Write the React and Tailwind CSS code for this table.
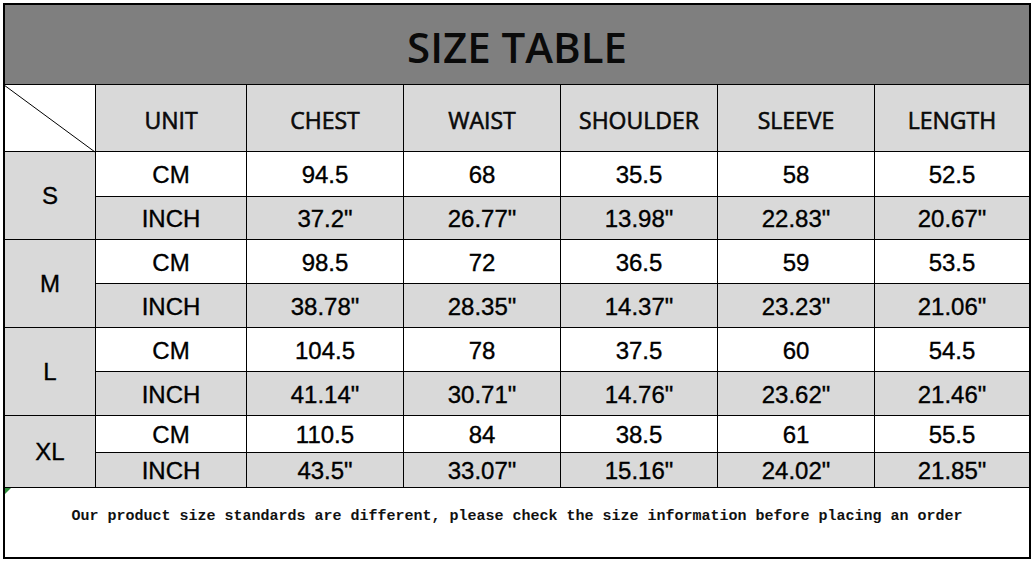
import React from "react";

const sizes = [
  { s: "S", cm: ["94.5", "68", "35.5", "58", "52.5"], inch: ['37.2"', '26.77"', '13.98"', '22.83"', '20.67"'] },
  { s: "M", cm: ["98.5", "72", "36.5", "59", "53.5"], inch: ['38.78"', '28.35"', '14.37"', '23.23"', '21.06"'] },
  { s: "L", cm: ["104.5", "78", "37.5", "60", "54.5"], inch: ['41.14"', '30.71"', '14.76"', '23.62"', '21.46"'] },
  { s: "XL", cm: ["110.5", "84", "38.5", "61", "55.5"], inch: ['43.5"', '33.07"', '15.16"', '24.02"', '21.85"'] },
];

const headers = ["UNIT", "CHEST", "WAIST", "SHOULDER", "SLEEVE", "LENGTH"];

const arial = { fontFamily: '"Liberation Sans", Arial, sans-serif' };
const head = { fontFamily: '"Open Sans", "Liberation Sans", sans-serif' };

function Cell({ children, gray }) {
  return (
    <div className={(gray ? "bg-[#d9d9d9]" : "bg-white") + " flex items-center justify-center pt-[2px]"}>
      <span className="text-[24px] text-black leading-none [-webkit-text-stroke:0.35px_#000]" style={arial}>{children}</span>
    </div>
  );
}

export default function App() {
  return (
    <div className="w-[1034px] h-[563px] bg-white pt-[3px] pl-[3px]">
      <div className="w-[1028px] h-[556px] border-2 border-black bg-black">
        <div className="grid grid-cols-[90px_150px_156px_156px_156px_156px_154px] grid-rows-[79px_66px_44px_42px_43px_43px_43px_43px_36px_34px_69px] gap-px h-full">
          <div className="col-span-7 bg-[#7f7f7f] flex items-center justify-center pt-[4px]">
            <span className="text-[42px] font-semibold text-[#0a0a0a] leading-none" style={head}>SIZE TABLE</span>
          </div>
          <div className="bg-white relative">
            <svg className="absolute inset-0" width="90" height="67" viewBox="0 0 90 67" style={{ left: 0, top: 0, overflow: "visible" }}>
              <line x1="-1" y1="0" x2="90" y2="67" stroke="#000" strokeWidth="1" />
            </svg>
          </div>
          {headers.map((h) => (
            <div key={h} className="bg-[#d9d9d9] flex items-center justify-center pt-[4px]">
              <span className="text-[23px] text-[#0a0a0a] leading-none [-webkit-text-stroke:0.6px_#0a0a0a]" style={head}>{h}</span>
            </div>
          ))}
          {sizes.map((row) => (
            <React.Fragment key={row.s}>
              <div className="row-span-2 bg-[#d9d9d9] flex items-center justify-center">
                <span className="text-[24px] text-black leading-none [-webkit-text-stroke:0.35px_#000]" style={arial}>{row.s}</span>
              </div>
              <Cell>CM</Cell>
              {row.cm.map((v, i) => (
                <Cell key={"c" + i}>{v}</Cell>
              ))}
              <Cell gray>INCH</Cell>
              {row.inch.map((v, i) => (
                <Cell key={"i" + i} gray>{v}</Cell>
              ))}
            </React.Fragment>
          ))}
          <div className="col-span-7 bg-white relative flex items-center justify-center pb-[12px]">
            <svg className="absolute left-0 top-0" width="6" height="6" viewBox="0 0 6 6">
              <polygon points="0,0 6,0 0,6" fill="#2e8b3a" />
            </svg>
            <span className="text-[15px] font-bold text-[#111] leading-none whitespace-pre" style={{ fontFamily: '"Liberation Mono", "Courier New", monospace' }}>
              Our product size standards are different, please check the size information before placing an order
            </span>
          </div>
        </div>
      </div>
    </div>
  );
}
